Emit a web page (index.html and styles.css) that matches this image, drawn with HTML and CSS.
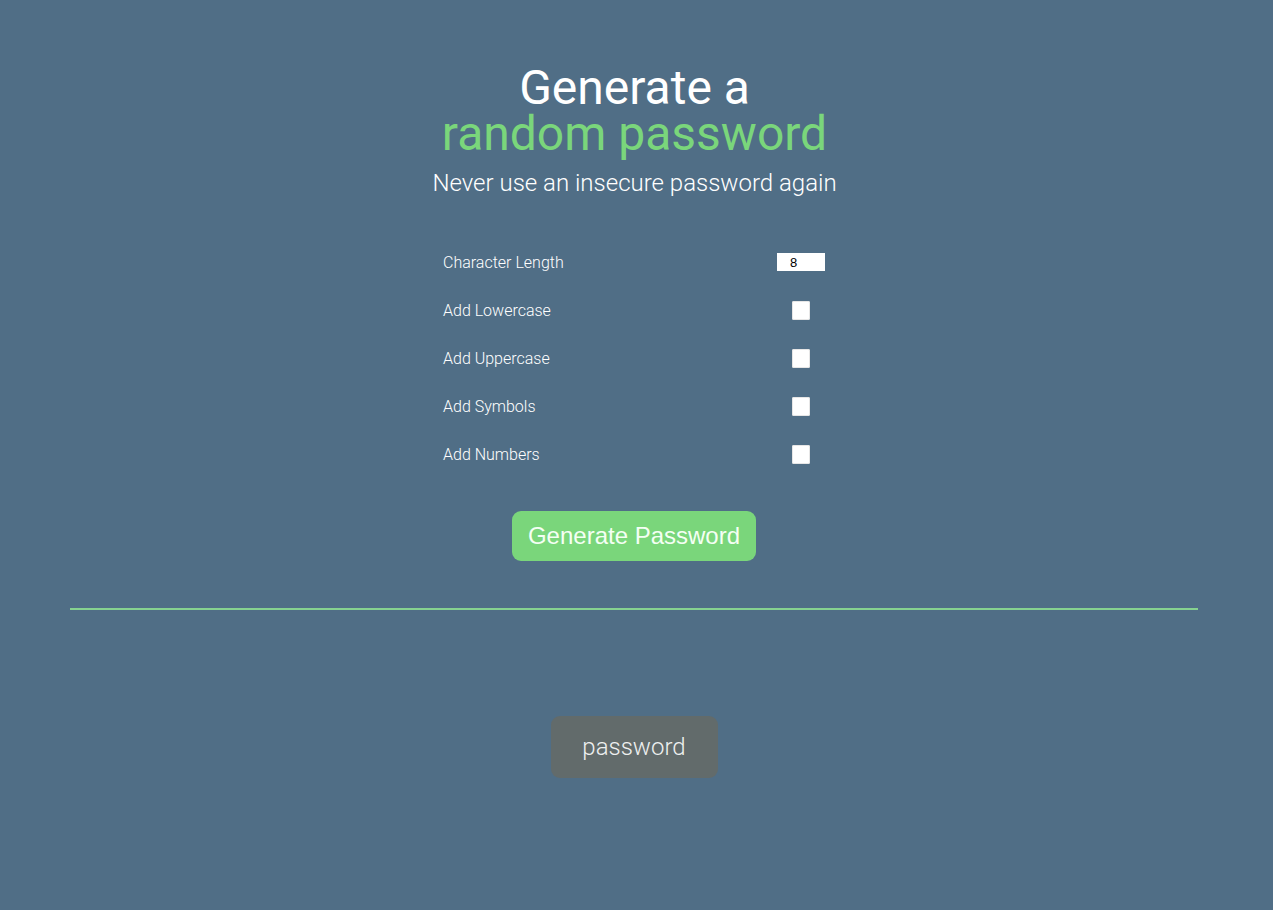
FILE: index.html
```html
<!DOCTYPE html>
<html>
<head>
<meta charset="utf-8">
<link rel="stylesheet" href="styles.css">
</head>
<body>
<div class="page">
  <header class="hero">
    <h1 class="title"><span class="line">Generate a</span><span class="line accent">random password</span></h1>
    <p class="subtitle">Never use an insecure password again</p>
  </header>
  <form class="options">
    <label class="label" for="len">Character Length</label>
    <div class="control"><input id="len" class="num" type="text" value="8"></div>
    <label class="label">Add Lowercase</label>
    <div class="control"><span class="box"></span></div>
    <label class="label">Add Uppercase</label>
    <div class="control"><span class="box"></span></div>
    <label class="label">Add Symbols</label>
    <div class="control"><span class="box"></span></div>
    <label class="label">Add Numbers</label>
    <div class="control"><span class="box"></span></div>
  </form>
  <div class="actions"><button class="generate" type="button">Generate Password</button></div>
  <div class="rule"></div>
  <div class="result"><div class="pw">password</div></div>
</div>
</body>
</html>
```
FILE: styles.css
```css
html, body {
  margin: 0;
  padding: 0;
  background: #506e86;
}
body {
  font-family: Roboto, "Liberation Sans", sans-serif;
  color: #ffffff;
}
.page {
  width: 1273px;
  min-height: 910px;
  display: flex;
  flex-direction: column;
  align-items: center;
}
.hero {
  display: flex;
  flex-direction: column;
  align-items: center;
  padding-top: 65px;
  padding-right: 4px;
}
.title {
  margin: 0;
  font-size: 48px;
  font-weight: 400;
  line-height: 46px;
  text-align: center;
  display: flex;
  flex-direction: column;
  align-items: center;
}
.line {
  display: block;
  height: 46px;
  overflow: visible;
}
.accent {
  color: #7ad67b;
}
.subtitle {
  margin: 11px 0 0;
  font-size: 24px;
  font-weight: 300;
  line-height: 30px;
}
.options {
  margin-top: 40px;
  width: 382px;
  margin-right: 5px;
  display: grid;
  grid-template-columns: 1fr 48px;
  grid-auto-rows: 48px;
}
.label {
  font-size: 16px;
  font-weight: 300;
  display: flex;
  align-items: center;
}
.control {
  display: flex;
  align-items: center;
  justify-content: center;
}
.num {
  width: 48px;
  height: 18px;
  box-sizing: border-box;
  border: none;
  margin: 0;
  padding: 0 0 0 13px;
  font-family: "Liberation Sans", Arial, sans-serif;
  font-size: 13px;
  color: #000;
  background: #fff;
}
.box {
  width: 18px;
  height: 19px;
  background: #fff;
  border-radius: 2px;
  box-shadow: inset 0 0 0 1px #e6e6e6;
}
.actions {
  margin-top: 33px;
  padding-right: 5px;
}
.generate {
  background: #7ad67b;
  border: none;
  border-radius: 9px;
  color: #f4fff4;
  font-family: "Liberation Sans", Arial, sans-serif;
  font-size: 24px;
  height: 50px;
  padding: 0 16px;
}
.rule {
  margin-top: 47px;
  width: 1128px;
  height: 2px;
  background: #86d290;
  margin-right: 5px;
}
.result {
  margin-top: 106px;
  padding-right: 5px;
}
.pw {
  background: #626b6b;
  border-radius: 9px;
  width: 167px;
  height: 62px;
  display: flex;
  align-items: center;
  justify-content: center;
  font-size: 24px;
  font-weight: 300;
  color: #eef0f0;
}
```
